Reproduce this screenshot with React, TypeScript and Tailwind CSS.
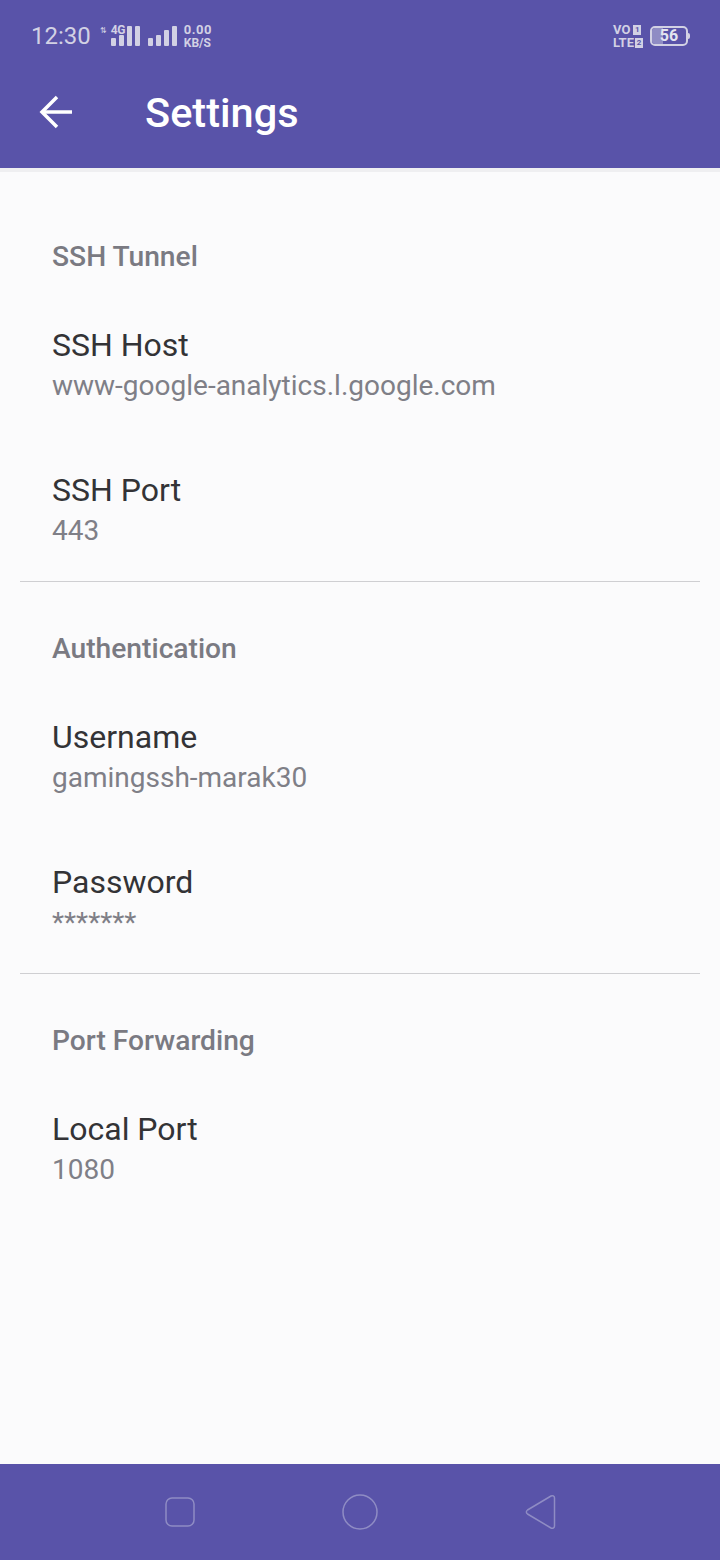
const F = "font-['Roboto',sans-serif]";

function Category({ children }: { children: string }) {
  return <div className="h-[32px] pl-[52px] text-[28.2px] leading-[32px] font-medium text-[#7a7a82]">{children}</div>;
}

function Item({ title, value }: { title: string; value: string }) {
  return (
    <div className="pl-[52px]">
      <div className="h-[40px] text-[32px] leading-[40px] text-[#333336]">{title}</div>
      <div className="h-[43px] text-[28px] leading-[41px] text-[#7f7f87]">{value}</div>
    </div>
  );
}

function Signal() {
  return (
    <svg width="30" height="20" viewBox="0 0 30 20" fill="#d2d1e4">
      <rect x="0" y="12" width="5" height="8" rx="1" />
      <rect x="8" y="9" width="5" height="11" rx="1" />
      <rect x="16" y="4" width="5" height="16" rx="1" />
      <rect x="24" y="0" width="5" height="20" rx="1" />
    </svg>
  );
}

export default function App() {
  return (
    <div className={`${F} w-[720px] h-[1560px] flex flex-col bg-[#fbfbfc]`}>
      <header className="h-[168px] shrink-0 bg-[#5953a9] flex flex-col">
        <div className="h-[56px] mt-[8px] flex items-center justify-between pl-[31px] pr-[30px] text-[#d2d1e4]">
          <div className="flex items-center">
            <span className="text-[24px] leading-[28px]">12:30</span>
            <span className="ml-[9px] flex items-end h-[20px]">
              <span className="relative w-[11px] h-[20px]">
                <span className="absolute left-0 top-[0px] text-[8px] leading-[10px]">⇅</span>
              </span>
              <span className="relative">
                <span className="absolute -top-[1px] left-[0px] text-[12px] leading-[11px] font-bold tracking-[-0.5px]">4G</span>
                <svg width="30" height="20" viewBox="0 0 30 20" fill="#d2d1e4">
                  <rect x="0" y="12" width="5" height="8" rx="1" />
                  <rect x="8" y="9" width="5" height="11" rx="1" />
                  <rect x="16" y="0" width="5" height="20" rx="1" />
                  <rect x="24" y="0" width="5" height="20" rx="1" />
                </svg>
              </span>
              <span className="ml-[7px]"><Signal /></span>
            </span>
            <span className="ml-[6px] flex flex-col font-bold text-[13px] leading-[12px] tracking-[0.5px] gap-[1px]">
              <span>0.00</span>
              <span className="text-[12px] tracking-normal">KB/S</span>
            </span>
          </div>
          <div className="flex items-center">
            <div className="flex flex-col font-bold text-[13px] leading-[12px] gap-[1px]">
              <span className="flex items-center">VO<span className="ml-[3px] w-[8px] h-[10px] bg-[#d2d1e4] text-[#5953a9] text-[8px] leading-[10px] text-center">1</span></span>
              <span className="flex items-center">LTE<span className="ml-[1px] w-[8px] h-[10px] bg-[#d2d1e4] text-[#5953a9] text-[8px] leading-[10px] text-center">2</span></span>
            </div>
            <div className="ml-[7px] flex items-center">
              <div className="relative w-[38px] h-[20px] rounded-[5px] border-2 border-[#d2d1e4] overflow-hidden">
                <div className="absolute left-0 top-0 bottom-0 w-[11px] bg-[#8f8cc4]" />
                <div className="relative text-center font-bold text-[16px] leading-[16px] text-[#e4e3ef]">56</div>
              </div>
              <div className="w-[2px] h-[6px] bg-[#d2d1e4] rounded-r-[2px]" />
            </div>
          </div>
        </div>
        <div className="flex items-center h-[96px] pl-[37px]">
          <svg width="40" height="36" viewBox="0 0 40 36" fill="none" stroke="#ffffff" strokeWidth="3.500">
            <path d="M35 18H6" />
            <path d="M20 3 5 18l15 15" />
          </svg>
          <h1 className="ml-[68px] pt-[2px] text-[41.5px] leading-[44px] font-medium text-white">Settings</h1>
        </div>
      </header>
      <div className="h-[4px] bg-[#efeff1]" />
      <main className="flex-1 flex flex-col">
        <div className="pt-[69px]">
          <Category>SSH Tunnel</Category>
          <div className="mt-[52px] flex flex-col gap-[62px]">
            <Item title="SSH Host" value="www-google-analytics.l.google.com" />
            <Item title="SSH Port" value="443" />
          </div>
        </div>
        <div className="mt-[28px] mx-[20px] h-px bg-[#cfcfd2]" />
        <div className="pt-[51px]">
          <Category>Authentication</Category>
          <div className="mt-[52px] flex flex-col gap-[62px]">
            <Item title="Username" value="gamingssh-marak30" />
            <Item title="Password" value="*******" />
          </div>
        </div>
        <div className="mt-[28px] mx-[20px] h-px bg-[#cfcfd2]" />
        <div className="pt-[51px]">
          <Category>Port Forwarding</Category>
          <div className="mt-[52px]">
            <Item title="Local Port" value="1080" />
          </div>
        </div>
      </main>
      <nav className="h-[96px] shrink-0 bg-[#5953a9] flex items-center">
        <div className="w-full flex items-center justify-between pl-[165px] pr-[164px]">
          <svg width="30" height="30" viewBox="0 0 30 30" fill="none" stroke="#8f8cc4" strokeWidth="1.500">
            <rect x="1" y="1" width="28" height="28" rx="6" />
          </svg>
          <svg width="36" height="36" viewBox="0 0 36 36" fill="none" stroke="#8f8cc4" strokeWidth="1.500">
            <circle cx="18" cy="18" r="17" />
          </svg>
          <svg width="31" height="36" viewBox="0 0 31 36" fill="none" stroke="#8f8cc4" strokeWidth="1.500">
            <path d="M2.500 16 26 2c1.500-.8 3.500 0 3.500 2v28c0 2-2 2.800-3.500 2L2.500 20c-1.500-1-1.500-3 0-4Z" />
          </svg>
        </div>
      </nav>
    </div>
  );
}
